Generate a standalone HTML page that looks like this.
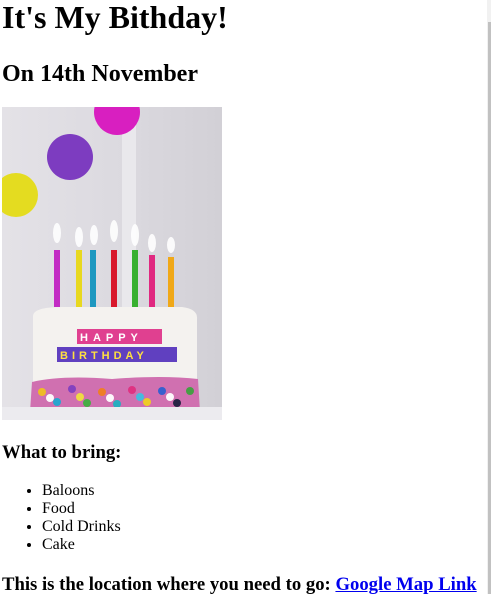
<!DOCTYPE html>
<html><head><style>
html,body{margin:0;padding:0;background:#fff;width:491px;height:594px;overflow:hidden;position:relative;font-family:"Liberation Serif",serif;color:#000}
.t{position:absolute;left:2px;margin:0;white-space:nowrap}
h1.t{font-size:32px;top:-1px;line-height:37px}
h2.t{font-size:24px;top:60px;line-height:28px}
h3.t{font-size:18.7px;line-height:22px}
ul{position:absolute;left:2px;top:482px;margin:0;padding-left:40px;font-size:16px;line-height:18px}
a{color:#0000ee}
.sb{position:absolute;left:487px;top:0;width:4px;height:594px;background:#f1f1f1}
.sb div{position:absolute;left:1px;top:22px;width:3px;height:572px;background:#c1c1c1}
</style></head><body>
<h1 class="t">It's My Bithday!</h1>
<h2 class="t">On 14th November</h2>
<svg style="position:absolute;left:2px;top:107px" width="220" height="313" viewBox="0 0 220 313">
<defs><linearGradient id="bg" x1="0" x2="1"><stop offset="0" stop-color="#e4e2e7"/><stop offset="0.5" stop-color="#dcdae0"/><stop offset="1" stop-color="#d2d0d6"/></linearGradient></defs>
<rect width="220" height="313" fill="url(#bg)"/>
<rect x="120" y="0" width="14" height="200" fill="#e9e8ec"/>
<circle cx="115" cy="5" r="23" fill="#d81fc0"/>
<circle cx="68" cy="50" r="23" fill="#7d3cc0"/>
<circle cx="14" cy="88" r="22" fill="#e4dc20"/>
<g fill="#fff" opacity="0.9">
<ellipse cx="55" cy="126" rx="4" ry="10"/><ellipse cx="77" cy="130" rx="4" ry="10"/><ellipse cx="92" cy="128" rx="4" ry="10"/><ellipse cx="112" cy="124" rx="4" ry="11"/><ellipse cx="133" cy="128" rx="4" ry="11"/><ellipse cx="150" cy="136" rx="4" ry="9"/><ellipse cx="169" cy="138" rx="4" ry="8"/>
</g>
<rect x="52" y="143" width="6" height="57" fill="#c22cc4"/>
<rect x="74" y="143" width="6" height="57" fill="#e8d820"/>
<rect x="88" y="143" width="6" height="57" fill="#1e98c0"/>
<rect x="109" y="143" width="6" height="57" fill="#d8182c"/>
<rect x="130" y="143" width="6" height="57" fill="#38b030"/>
<rect x="147" y="148" width="6" height="52" fill="#e02880"/>
<rect x="166" y="150" width="6" height="50" fill="#f0a818"/>
<path d="M31 210 Q30 200 60 200 L180 200 Q196 202 195 212 L195 300 L31 300 Z" fill="#f4f2ef"/>
<g font-family="Liberation Sans,sans-serif" font-weight="bold" font-size="11">
<rect x="75" y="222" width="85" height="15" fill="#e04090"/><text x="78" y="234" fill="#fff" letter-spacing="5">HAPPY</text>
<rect x="55" y="240" width="120" height="15" fill="#6040c0"/><text x="58" y="252" fill="#ffe040" letter-spacing="4">BIRTHDAY</text>
</g>
<path d="M30 275 Q60 268 110 272 Q160 268 196 272 L198 305 L28 305 Z" fill="#d070b0"/>
<g opacity="0.95">
<circle cx="40" cy="285" r="4" fill="#f0c020"/><circle cx="55" cy="295" r="4" fill="#20a8d0"/><circle cx="70" cy="282" r="4" fill="#8040c0"/><circle cx="85" cy="296" r="4" fill="#40b040"/><circle cx="100" cy="285" r="4" fill="#f08020"/><circle cx="115" cy="297" r="4" fill="#20b0c0"/><circle cx="130" cy="283" r="4" fill="#e03080"/><circle cx="145" cy="295" r="4" fill="#f0d020"/><circle cx="160" cy="284" r="4" fill="#3060d0"/><circle cx="175" cy="296" r="4" fill="#202040"/><circle cx="188" cy="284" r="4" fill="#40a040"/>
<circle cx="48" cy="291" r="4" fill="#fff"/><circle cx="78" cy="290" r="4" fill="#f0e040"/><circle cx="108" cy="291" r="4" fill="#fff"/><circle cx="138" cy="290" r="4" fill="#40c0e0"/><circle cx="168" cy="290" r="4" fill="#fff"/>
</g>
<rect y="300" width="220" height="13" fill="#ecebef"/>
</svg>
<h3 class="t" style="top:442px">What to bring:</h3>
<ul><li>Baloons</li><li>Food</li><li>Cold Drinks</li><li>Cake</li></ul>
<h3 class="t" style="top:574px">This is the location where you need to go: <a href="#">Google Map Link</a></h3>
<div class="sb"><div></div></div>
</body></html>
